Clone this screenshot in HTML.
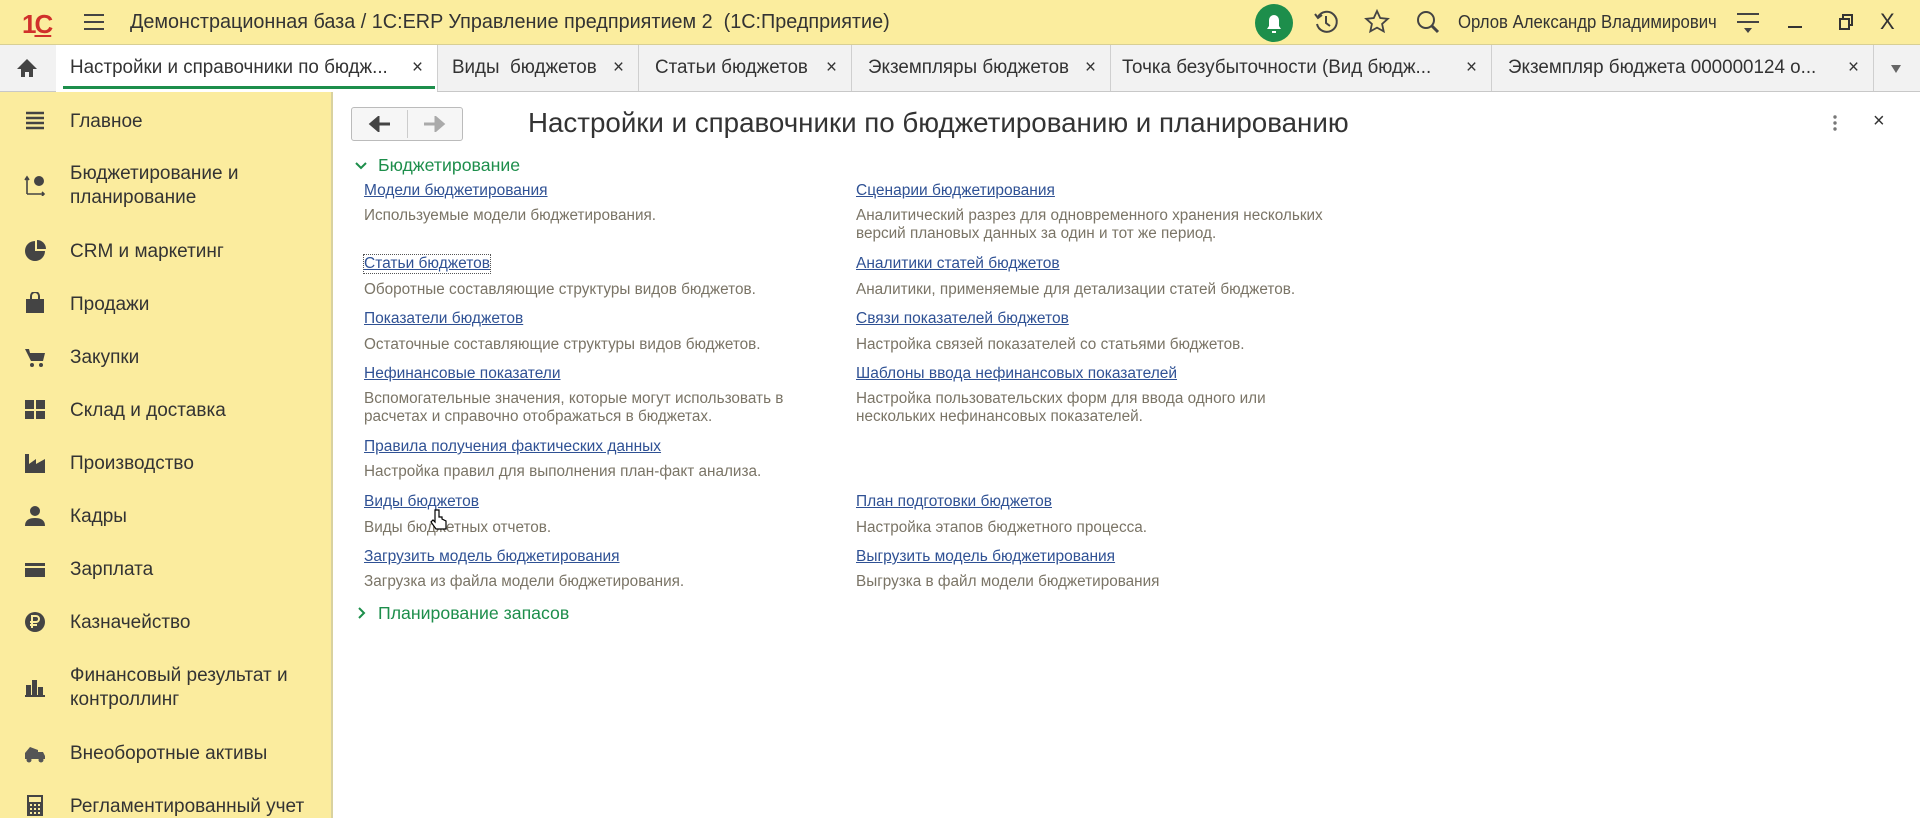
<!DOCTYPE html>
<html><head><meta charset="utf-8"><style>
*{margin:0;padding:0;box-sizing:border-box}
body{width:1920px;height:818px;overflow:hidden;background:#fff;font-family:"Liberation Sans",sans-serif;position:relative;color:#333}
.a{position:absolute;white-space:nowrap}
.top{left:0;top:0;width:1920px;height:45px;background:#fbed9e;border-bottom:1px solid #d8cf94}
.tabs{left:0;top:45px;width:1920px;height:47px;background:#f2f2f2;border-bottom:1px solid #c8c8c8}
.sep{position:absolute;top:0;width:1px;height:46px;background:#cfcfcf}
.tab{position:absolute;top:12px;font-size:19px;color:#333;transform-origin:left;transform:scaleX(.99)}
.side{left:0;top:92px;width:333px;height:726px;background:#fbec9e;border-right:2px solid #d9d29f}
.si{position:absolute;left:70px;font-size:19px;color:#333;line-height:24px}
.ic{position:absolute;left:24px;width:22px;height:22px}
.lk{position:absolute;font-size:15.5px;color:#2f5194;text-decoration:underline}
.ds{position:absolute;font-size:15.3px;color:#7a7466;line-height:18px}
</style></head><body>
<div class="a top">
 <div class="a" style="left:22px;top:9px;font-size:26px;font-weight:bold;color:#d0302b;letter-spacing:-2px">1<span style="text-decoration:underline">C</span></div>
 <svg class="a" style="left:82px;top:12px" width="24" height="20"><path d="M2 3h20M2 10h20M2 17h20" stroke="#444" stroke-width="2"/></svg>
 <div class="a" style="left:130px;top:11px;font-size:20px;color:#333;transform-origin:left;transform:scaleX(.99)">Демонстрационная база / 1С:ERP Управление предприятием 2 &nbsp;(1С:Предприятие)</div>
 <svg class="a" style="left:1255px;top:4px" width="38" height="38"><circle cx="19" cy="19" r="19" fill="#1d8e4b"/><path d="M12 25h14l-2-3v-6a5 5 0 0 0-10 0v6z M17 27h4v2h-4z" fill="#fff"/></svg>
 <svg class="a" style="left:1313px;top:9px" width="26" height="26"><path d="M5 8a10 10 0 1 1-1 7" fill="none" stroke="#444" stroke-width="2"/><path d="M2 5l3 4 4-3" fill="none" stroke="#444" stroke-width="2"/><path d="M13 7v7l4 3" fill="none" stroke="#444" stroke-width="2"/></svg>
 <svg class="a" style="left:1364px;top:9px" width="26" height="26"><path d="M13 2l3.2 7 7.6.8-5.7 5.1 1.6 7.5L13 18.6 6.3 22.4l1.6-7.5L2.2 9.8 9.8 9z" fill="none" stroke="#444" stroke-width="1.8"/></svg>
 <svg class="a" style="left:1415px;top:9px" width="26" height="26"><circle cx="11" cy="11" r="8" fill="none" stroke="#444" stroke-width="2"/><path d="M17 17l6 6" stroke="#444" stroke-width="3"/></svg>
 <div class="a" style="left:1458px;top:12px;font-size:18px;color:#333;transform-origin:left;transform:scaleX(.93)">Орлов Александр Владимирович</div>
 <svg class="a" style="left:1735px;top:10px" width="26" height="26"><path d="M2 4h22M2 12h22" stroke="#444" stroke-width="2"/><path d="M9 18h8l-4 5z" fill="#444"/></svg>
 <div class="a" style="left:1788px;top:26px;width:14px;height:2px;background:#333"></div>
 <svg class="a" style="left:1838px;top:14px" width="16" height="16"><rect x="2" y="5" width="9" height="10" fill="none" stroke="#333" stroke-width="2"/><path d="M5 4V1h9v10h-3" fill="none" stroke="#333" stroke-width="2"/></svg>
 <div class="a" style="left:1880px;top:9px;font-size:22px;color:#333">X</div>
</div>
<div class="a tabs">
 <svg class="a" style="left:16px;top:13px" width="22" height="20"><path d="M11 1L1 11h4v8h4v-5h4v5h4v-8h4z" fill="#444"/></svg>
 <div class="sep" style="left:56px"></div>
 <div class="a" style="left:56px;top:0;width:381px;height:47px;background:#fff"></div>
 <div class="a" style="left:63px;top:41px;width:372px;height:3px;background:#1d8e4b"></div>
 <div class="tab" style="left:70px">Настройки и справочники по бюдж...</div><div class="tab" style="left:412px">×</div>
 <div class="sep" style="left:437px"></div>
 <div class="tab" style="left:452px">Виды &nbsp;бюджетов</div><div class="tab" style="left:613px">×</div>
 <div class="sep" style="left:638px"></div>
 <div class="tab" style="left:655px">Статьи бюджетов</div><div class="tab" style="left:826px">×</div>
 <div class="sep" style="left:851px"></div>
 <div class="tab" style="left:868px">Экземпляры бюджетов</div><div class="tab" style="left:1085px">×</div>
 <div class="sep" style="left:1110px"></div>
 <div class="tab" style="left:1122px">Точка безубыточности (Вид бюдж...</div><div class="tab" style="left:1466px">×</div>
 <div class="sep" style="left:1491px"></div>
 <div class="tab" style="left:1508px">Экземпляр бюджета 000000124 о...</div><div class="tab" style="left:1848px">×</div>
 <div class="sep" style="left:1873px"></div>
 <svg class="a" style="left:1890px;top:19px" width="12" height="10"><path d="M1 1h10L6 9z" fill="#666"/></svg>
</div>
<div class="a side">
 <svg class="ic" style="top:18px" viewBox="0 0 22 22"><path d="M2 3h18M2 8h18M2 13h18M2 18h18" stroke="#444" stroke-width="2.5"/></svg>
 <div class="si" style="top:18px">Главное</div>
 <svg class="ic" style="top:82px" viewBox="0 0 22 22"><path d="M3 20V4M1 6l2-3 2 3M3 20h17M18 18l2 2-2 2" stroke="#444" stroke-width="1.6" fill="none"/><circle cx="15" cy="7" r="5" fill="#444"/></svg>
 <div class="si" style="top:70px">Бюджетирование и<br>планирование</div>
 <svg class="ic" style="top:148px" viewBox="0 0 22 22"><path d="M11 11V1a10 10 0 1 0 10 10z" fill="#444"/><path d="M13 0a9 9 0 0 1 9 9h-9z" fill="#444"/></svg>
 <div class="si" style="top:148px">CRM и маркетинг</div>
 <svg class="ic" style="top:200px" viewBox="0 0 22 22"><path d="M2 7h18v14H2z" fill="#444"/><path d="M7 8V4a4 4 0 0 1 8 0v4" stroke="#444" stroke-width="2" fill="none"/></svg>
 <div class="si" style="top:201px">Продажи</div>
 <svg class="ic" style="top:254px" viewBox="0 0 22 22"><path d="M1 3h4l1 4h15l-2 8H7z" fill="#444"/><circle cx="8" cy="19" r="2" fill="#444"/><circle cx="17" cy="19" r="2" fill="#444"/></svg>
 <div class="si" style="top:254px">Закупки</div>
 <svg class="ic" style="top:307px" viewBox="0 0 22 22"><path d="M1 1h9v9H1zM12 1h9v9h-9zM1 12h9v8H1zM12 12h9v8h-9z" fill="#444"/></svg>
 <div class="si" style="top:307px">Склад и доставка</div>
 <svg class="ic" style="top:360px" viewBox="0 0 22 22"><path d="M1 21V2h4v10l7-5v5l9-5v14z" fill="#444"/></svg>
 <div class="si" style="top:360px">Производство</div>
 <svg class="ic" style="top:413px" viewBox="0 0 22 22"><circle cx="11" cy="6" r="5" fill="#444"/><path d="M1 21c0-6 4-8 10-8s10 2 10 8z" fill="#444"/></svg>
 <div class="si" style="top:413px">Кадры</div>
 <svg class="ic" style="top:467px" viewBox="0 0 22 22"><path d="M1 4h20v14H1z" fill="#444"/><path d="M1 8h20" stroke="#fbec9e" stroke-width="2"/></svg>
 <div class="si" style="top:466px">Зарплата</div>
 <svg class="ic" style="top:519px" viewBox="0 0 22 22"><circle cx="11" cy="11" r="10" fill="#444"/><path d="M8 17V5h4a3 3 0 0 1 0 6H6M6 14h7" stroke="#fbec9e" stroke-width="2" fill="none"/></svg>
 <div class="si" style="top:519px">Казначейство</div>
 <svg class="ic" style="top:584px" viewBox="0 0 22 22"><path d="M1 20h20M3 20V10h3v10M9 20V5h3v15M15 20v-8h3v8" stroke="#444" stroke-width="2" fill="#444"/></svg>
 <div class="si" style="top:572px">Финансовый результат и<br>контроллинг</div>
 <svg class="ic" style="top:650px" viewBox="0 0 22 22"><path d="M1 17V11l5-6 8 3v9zM14 10h5l2 4v3h-7z" fill="#555"/><circle cx="5" cy="18" r="2.5" fill="#555"/><circle cx="17" cy="18" r="2.5" fill="#555"/></svg>
 <div class="si" style="top:650px">Внеоборотные активы</div>
 <svg class="ic" style="top:702px" viewBox="0 0 22 22"><path d="M3 1h16v21H3z" fill="#444"/><path d="M5 3h12v5H5z" fill="#fbec9e"/><path d="M6 11h2M10 11h2M14 11h2M6 15h2M10 15h2M14 15h2M6 19h2M10 19h2M14 19h2" stroke="#fbec9e" stroke-width="2"/></svg>
 <div class="si" style="top:703px">Регламентированный учет</div>
</div>
<div class="a" style="left:351px;top:107px;width:112px;height:34px;border:1px solid #bbb;border-radius:3px;background:#f6f6f6"></div>
<div class="a" style="left:407px;top:110px;width:1px;height:28px;background:#ccc"></div>
<svg class="a" style="left:368px;top:116px" width="24" height="16"><path d="M22 8H6M10 2L3 8l7 6z" stroke="#444" stroke-width="3" fill="#444"/></svg>
<svg class="a" style="left:422px;top:116px" width="24" height="16"><path d="M2 8h16M14 2l7 6-7 6z" stroke="#aaa" stroke-width="3" fill="#aaa"/></svg>
<div class="a" style="left:528px;top:107px;font-size:28px;color:#333;transform-origin:left;transform:scaleX(.99)">Настройки и справочники по бюджетированию и планированию</div>
<svg class="a" style="left:1832px;top:114px" width="6" height="20"><circle cx="3" cy="3" r="1.7" fill="#777"/><circle cx="3" cy="9" r="1.7" fill="#777"/><circle cx="3" cy="15" r="1.7" fill="#777"/></svg>
<div class="a" style="left:1873px;top:110px;font-size:20px;color:#333">×</div>
<svg class="a" style="left:354px;top:160px" width="14" height="12"><path d="M2 3l5 5 5-5" stroke="#1d8e4b" stroke-width="2" fill="none"/></svg>
<div class="a" style="left:378px;top:155px;font-size:17.7px;color:#1d8e4b">Бюджетирование</div>
<div class="lk" style="left:364px;top:182px">Модели бюджетирования</div>
<div class="ds" style="left:364px;top:207px">Используемые модели бюджетирования.</div>
<div class="lk" style="left:364px;top:255px;outline:1px dotted #555">Статьи бюджетов</div>
<div class="ds" style="left:364px;top:281px">Оборотные составляющие структуры видов бюджетов.</div>
<div class="lk" style="left:364px;top:310px">Показатели бюджетов</div>
<div class="ds" style="left:364px;top:336px">Остаточные составляющие структуры видов бюджетов.</div>
<div class="lk" style="left:364px;top:365px">Нефинансовые показатели</div>
<div class="ds" style="left:364px;top:390px">Вспомогательные значения, которые могут использовать в<br>расчетах и справочно отображаться в бюджетах.</div>
<div class="lk" style="left:364px;top:438px">Правила получения фактических данных</div>
<div class="ds" style="left:364px;top:463px">Настройка правил для выполнения план-факт анализа.</div>
<div class="lk" style="left:364px;top:493px">Виды бюджетов</div>
<div class="ds" style="left:364px;top:519px">Виды бюджетных отчетов.</div>
<div class="lk" style="left:364px;top:548px">Загрузить модель бюджетирования</div>
<div class="ds" style="left:364px;top:573px">Загрузка из файла модели бюджетирования.</div>
<div class="lk" style="left:856px;top:182px">Сценарии бюджетирования</div>
<div class="ds" style="left:856px;top:207px">Аналитический разрез для одновременного хранения нескольких<br>версий плановых данных за один и тот же период.</div>
<div class="lk" style="left:856px;top:255px">Аналитики статей бюджетов</div>
<div class="ds" style="left:856px;top:281px">Аналитики, применяемые для детализации статей бюджетов.</div>
<div class="lk" style="left:856px;top:310px">Связи показателей бюджетов</div>
<div class="ds" style="left:856px;top:336px">Настройка связей показателей со статьями бюджетов.</div>
<div class="lk" style="left:856px;top:365px">Шаблоны ввода нефинансовых показателей</div>
<div class="ds" style="left:856px;top:390px">Настройка пользовательских форм для ввода одного или<br>нескольких нефинансовых показателей.</div>
<div class="lk" style="left:856px;top:493px">План подготовки бюджетов</div>
<div class="ds" style="left:856px;top:519px">Настройка этапов бюджетного процесса.</div>
<div class="lk" style="left:856px;top:548px">Выгрузить модель бюджетирования</div>
<div class="ds" style="left:856px;top:573px">Выгрузка в файл модели бюджетирования</div>
<svg class="a" style="left:430px;top:508px" width="18" height="24"><path d="M5 2v12l-2-2-2 2 5 7h10v-8l-4-2v-2l-3 0V2z" fill="#fff" stroke="#000" stroke-width="1.2"/></svg>
<svg class="a" style="left:356px;top:606px" width="12" height="14"><path d="M3 2l5 5-5 5" stroke="#1d8e4b" stroke-width="2" fill="none"/></svg>
<div class="a" style="left:378px;top:603px;font-size:17.7px;color:#1d8e4b">Планирование запасов</div>
</body></html>
